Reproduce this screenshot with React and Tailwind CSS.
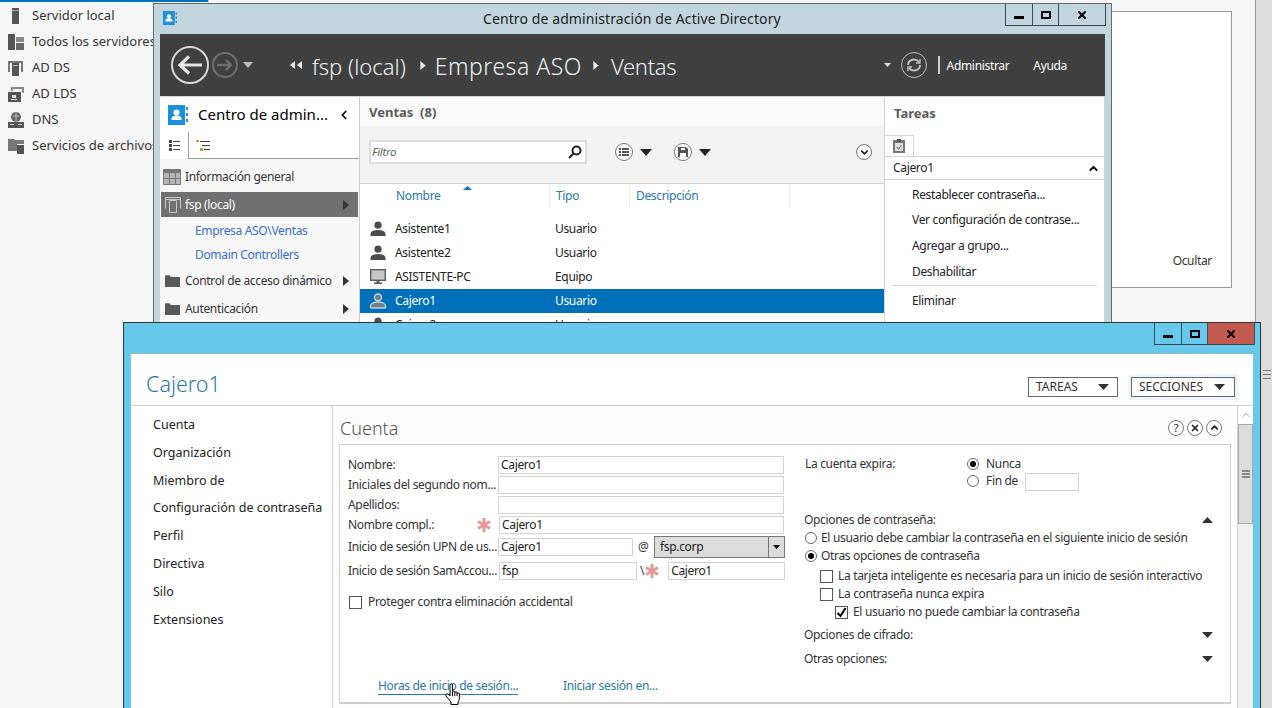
import { ChevronLeft, ChevronUp, ChevronDown, X } from 'lucide-react'

const FONT = "font-['Noto_Sans','Open_Sans',sans-serif]"

const TriDown = ({ className = '' }) => (
  <svg className={className} width="12" height="7" viewBox="0 0 12 7" preserveAspectRatio="none"><path d="M0 0h12L6 7z" fill="currentColor" /></svg>
)
const TriUp = ({ className = '' }) => (
  <svg className={className} width="12" height="7" viewBox="0 0 12 7" preserveAspectRatio="none"><path d="M0 7h12L6 0z" fill="currentColor" /></svg>
)
const TriRight = ({ className = '' }) => (
  <svg className={className} width="6" height="10" viewBox="0 0 6 10"><path d="M0 0l6 5-6 5z" fill="currentColor" /></svg>
)

const UserIcon = ({ color = '#4d4d4d' }) => (
  <svg width="16" height="16" viewBox="0 0 16 16">
    <circle cx="8" cy="4.2" r="3.6" fill={color} />
    <path d="M0.5 15v-2.2C0.5 10.5 4 9 8 9s7.500 1.500 7.500 3.800V15z" fill={color} />
  </svg>
)
const UserOutline = () => (
  <svg width="16" height="16" viewBox="0 0 16 16" fill="#6f7f8c" stroke="#fff" strokeWidth="1">
    <circle cx="8" cy="4.4" r="3.6" />
    <path d="M0.5 15v-2.2C0.5 10.5 4 9 8 9s7.500 1.500 7.500 3.800V15z" />
  </svg>
)
const PcIcon = () => (
  <svg width="16" height="16" viewBox="0 0 16 16">
    <rect x="0.7" y="0.7" width="14.6" height="10.6" fill="#c9c9c9" stroke="#5a5a5a" strokeWidth="1.4" />
    <path d="M6.5 12h3v1.500h2.500V15H4v-1.500h2.500z" fill="#5a5a5a" />
  </svg>
)
const FolderIcon = () => (
  <svg width="15" height="12" viewBox="0 0 15 12">
    <path d="M0 1h5l1 1h9v10H0z" fill="#595959" />
    <path d="M0 0h5v1H0z" fill="#8a8a8a" />
  </svg>
)
const ServerIcons = {
  local: <svg width="16" height="16" viewBox="0 0 16 16"><rect x="4" y="0" width="7" height="16" fill="#555" /><rect x="4" y="2" width="7" height="1" fill="#aaa" /></svg>,
  all: <svg width="16" height="16" viewBox="0 0 16 16"><rect x="0" y="0" width="7" height="16" fill="#555" /><rect x="8" y="3" width="8" height="5" fill="#888" /><rect x="8" y="9" width="8" height="7" fill="#666" /></svg>,
  adds: <svg width="16" height="16" viewBox="0 0 16 16"><path d="M0 1h15v2H0zM0 3h2v9H0zM13 3h2v9h-2z" fill="#777" /><rect x="4" y="3" width="7" height="13" fill="#555" /><rect x="5" y="5" width="5" height="1" fill="#bbb" /></svg>,
  adlds: <svg width="16" height="16" viewBox="0 0 16 16"><path d="M3 1h13v2H3zM3 3h2v2H3zM14 3h2v4h-2z" fill="#888" /><rect x="0" y="6" width="13" height="10" fill="#555" /><rect x="4" y="9" width="4" height="3" fill="#ddd" /><rect x="3" y="13" width="6" height="1" fill="#ddd" /></svg>,
  dns: <svg width="16" height="16" viewBox="0 0 16 16"><circle cx="8" cy="5" r="5" fill="#666" /><path d="M5 4h6M8 0v10" stroke="#bbb" /><rect x="0" y="10" width="16" height="6" fill="#555" /><rect x="2" y="12" width="4" height="1" fill="#ccc" /><rect x="10" y="12" width="4" height="1" fill="#ccc" /></svg>,
  files: <svg width="16" height="16" viewBox="0 0 16 16"><path d="M0 1h6l1 1h9v4H9v7H0z" fill="#777" /><rect x="9" y="7" width="7" height="9" fill="#555" /></svg>,
}

const ADIcon = ({ size = 20 }) => (
  <svg width={size} height={size} viewBox="0 0 20 20">
    <rect x="0" y="0" width="17" height="20" fill="#1e8fdc" />
    <circle cx="8.5" cy="7.5" r="3" fill="#fff" />
    <path d="M3.500 15v-1.500c0-2 2.500-3 5-3s5 1 5 3V15z" fill="#fff" />
    <path d="M18 2h2v3h-2zM18 8h2v3h-2zM18 14h2v3h-2z" fill="#1e8fdc" />
  </svg>
)

const servers = [
  ['local', 'Servidor local'],
  ['all', 'Todos los servidores'],
  ['adds', 'AD DS'],
  ['adlds', 'AD LDS'],
  ['dns', 'DNS'],
  ['files', 'Servicios de archivos'],
]

const ServerSidebar = () => (
  <div className="flex w-[208px] flex-col pt-px">
    {servers.map(([key, label]) => (
      <div key={key} className="flex h-[26px] items-center gap-[8px] pl-[8px] text-[13px] text-[#333]">
        {ServerIcons[key]}
        <span className="whitespace-nowrap">{label}</span>
      </div>
    ))}
  </div>
)

const WinButtons = ({ red }) => (
  <div className="flex h-[22px] border border-t-0 border-[#3a4a50] text-black">
    <div className="flex w-[27px] items-center justify-center border-r border-[#3a4a50]">
      <div className="mt-[6px] h-[3px] w-[10px] bg-black" />
    </div>
    <div className="flex w-[26px] items-center justify-center border-r border-[#3a4a50]">
      <div className="h-[8px] w-[10px] border-2 border-black" />
    </div>
    <div className={`flex w-[46px] items-center justify-center ${red ? 'bg-[#c25a50]' : ''}`}>
      <X size={12} strokeWidth={4} />
    </div>
  </div>
)

const rows = [
  ['user', 'Asistente1', 'Usuario'],
  ['user', 'Asistente2', 'Usuario'],
  ['pc', 'ASISTENTE-PC', 'Equipo'],
  ['sel', 'Cajero1', 'Usuario'],
  ['user', 'Cajero2', 'Usuario'],
]

const NavTree = () => (
  <div className="flex w-[200px] flex-col whitespace-nowrap border-r border-[#cfcfcf] bg-[#f7f7f7]">
    <div className="flex h-[35px] items-center bg-white pl-[8px] pr-[8px]">
      <ADIcon size={20} />
      <span className="ml-[10px] flex-1 text-[15px] tracking-normal text-black">Centro de admin...</span>
      <ChevronLeft size={14} strokeWidth={3} className="text-black" />
    </div>
    <div className="flex h-[27px] border-b border-[#9a9a9a] bg-white">
      <div className="flex h-[27px] w-[29px] items-center justify-center border-r border-[#9a9a9a] bg-white">
        <svg width="11" height="11" viewBox="0 0 11 11" fill="#444"><path d="M0 0h3v3H0zM4 1h7v1H4zM0 4h3v3H0zM4 5h7v1H4zM0 8h3v3H0zM4 9h7v1H4z" /></svg>
      </div>
      <div className="flex w-[29px] items-center justify-center">
        <svg width="15" height="11" viewBox="0 0 15 11"><path d="M0 0h3v2H0zM4 8h3v3H4z" fill="#c79a3a" /><path d="M4 1h10v1H4zM6 5h8v1H6zM8 9h6v1H8z" fill="#444" /></svg>
      </div>
    </div>
    <div className="flex h-[33px] items-center gap-[4px] pl-[3px] pt-[2px] text-[12px] text-[#333]">
      <svg width="18" height="16" viewBox="0 0 18 16"><rect width="18" height="16" fill="#777" /><path d="M1 4h5v5H1zM7 4h5v5H7zM13 4h4v5h-4zM1 10h5v5H1zM7 10h5v5H7zM13 10h4v5h-4z" fill="#b5b5b5" /></svg>
      <span>Información general</span>
    </div>
    <div className="mx-px flex h-[25px] items-center gap-[4px] bg-[#707070] pl-[4px] pr-[9px] text-[12px] text-white">
      <svg width="16" height="16" viewBox="0 0 16 16" fill="none" stroke="#c8c8c8"><path d="M.5.5h15v2H.5zM.5 2.500v9M15.500 2.500v9M4.500 3.500h7v12h-7z" /></svg>
      <span className="flex-1">fsp (local)</span>
      <TriRight className="text-[#333]" />
    </div>
    <div className="flex h-[25px] items-center pl-[35px] pt-[2px] text-[12px] text-[#3a6ecb]">Empresa ASO\Ventas</div>
    <div className="flex h-[24px] items-center pl-[35px] pt-[2px] text-[12px] text-[#3a6ecb]">Domain Controllers</div>
    <div className="flex h-[28px] items-center gap-[5px] pl-[5px] pr-[10px] pt-[2px] text-[12px] text-[#333]">
      <FolderIcon />
      <span className="flex-1">Control de acceso dinámico</span>
      <TriRight className="text-[#333]" />
    </div>
    <div className="flex h-[28px] items-center gap-[5px] pl-[5px] pr-[10px] pt-[2px] text-[12px] text-[#333]">
      <FolderIcon />
      <span className="flex-1">Autenticación</span>
      <TriRight className="text-[#333]" />
    </div>
  </div>
)

const MainList = () => (
  <div className="flex w-[524px] flex-col bg-white">
    <div className="flex h-[29px] items-center bg-[#fafafa] pl-[9px] pt-[2px] text-[13px] font-bold tracking-normal text-[#5b5b5b]">
      Ventas&nbsp;&nbsp;(8)
    </div>
    <div className="flex h-[58px] items-center border-b border-[#d5d5d5] bg-[#f2f2f2] pb-[5px] pl-[9px] pr-[12px]">
      <div className="flex h-[24px] w-[218px] items-center justify-between border-2 border-[#dcdcdc] bg-white pl-[1px] pr-[3px] text-[11.5px] italic text-[#666]">
        <span>Filtro</span>
        <svg width="14" height="14" viewBox="0 0 14 14" fill="none" stroke="#222" strokeWidth="2"><circle cx="8.5" cy="5.5" r="4" /><path d="M5.500 8.500L1 13" /></svg>
      </div>
      <div className="ml-[28px] flex h-[18px] w-[18px] items-center justify-center rounded-full border border-[#777] bg-white">
        <svg width="10" height="8" viewBox="0 0 10 8" fill="#555"><path d="M0 0h2v2H0zM3 0h7v2H3zM0 3h2v2H0zM3 3h7v2H3zM0 6h2v2H0zM3 6h7v2H3z" /></svg>
      </div>
      <TriDown className="ml-[7px] text-[#222]" />
      <div className="ml-[22px] flex h-[18px] w-[18px] items-center justify-center rounded-full border border-[#777] bg-white">
        <svg width="10" height="10" viewBox="0 0 10 10" fill="#555"><path d="M0 0h8l2 2v8H0zM2 6v4h6V6zM3 1v2h4V1z" /></svg>
      </div>
      <TriDown className="ml-[7px] text-[#222]" />
      <div className="ml-auto flex h-[16px] w-[16px] items-center justify-center rounded-full border border-[#777] bg-white">
        <ChevronDown size={11} strokeWidth={3.5} className="text-[#222]" />
      </div>
    </div>
    <div className="relative flex h-[24px] items-center text-[12px] text-[#2a78b5]">
      <TriUp className="absolute left-[103px] top-[2px] h-[4px] w-[9px] text-[#1673b8]" />
      <div className="flex h-full w-[190px] items-center border-r border-[#ececec] pl-[36px]">Nombre</div>
      <div className="flex h-full w-[80px] items-center border-r border-[#ececec] pl-[6px]">Tipo</div>
      <div className="flex h-full w-[160px] items-center border-r border-[#ececec] pl-[6px]">Descripción</div>
    </div>
    <div className="flex flex-col pt-[9px] text-[12px] text-[#222]">
      {rows.map(([kind, name, type]) => (
        <div key={name} className={`flex h-[24px] shrink-0 items-center ${kind === 'sel' ? 'bg-[#0070bb] text-white' : ''}`}>
          <div className="flex w-[35px] justify-center pl-[1px]">
            {kind === 'user' && <UserIcon />}
            {kind === 'pc' && <PcIcon />}
            {kind === 'sel' && <UserOutline />}
          </div>
          <div className="w-[160px]">{name}</div>
          <div>{type}</div>
        </div>
      ))}
    </div>
  </div>
)

const tasks = ['Restablecer contraseña...', 'Ver configuración de contrase...', 'Agregar a grupo...', 'Deshabilitar']

const TasksPanel = () => (
  <div className="flex w-[220px] flex-col border-l border-[#d5d5d5] bg-white">
    <div className="flex h-[38px] items-center pb-[4px] pl-[9px] text-[13px] font-bold tracking-normal text-[#5b5b5b]">Tareas</div>
    <div className="flex h-[21px] items-end">
      <div className="flex h-[21px] w-[29px] items-center justify-center border-r border-t border-[#d5d5d5]">
        <svg width="12" height="14" viewBox="0 0 12 14">
          <rect y="1" width="12" height="13" fill="#777" />
          <rect x="2" y="4" width="8" height="8" fill="#e2e2e2" />
          <rect x="4" y="0" width="4" height="3" fill="#555" />
          <path d="M3.500 8l2 2 3-4" fill="none" stroke="#888" strokeWidth="1.2" />
        </svg>
      </div>
    </div>
    <div className="flex h-[24px] items-center justify-between border-y border-[#d5d5d5] pl-[8px] pr-[4px] text-[12px] text-[#222]">
      <span>Cajero1</span>
      <ChevronUp size={13} strokeWidth={3.5} className="text-black" />
    </div>
    <div className="flex flex-col pl-[27px] pt-[2px] text-[12px] text-[#222]">
      {tasks.map((t) => (
        <div key={t} className="flex h-[25.6px] items-center">{t}</div>
      ))}
    </div>
    <div className="ml-[7px] mr-[7px] mt-[1px] border-t border-[#d5d5d5]" />
    <div className="flex h-[29px] items-center pl-[27px] text-[12px] text-[#222]">Eliminar</div>
  </div>
)

const ADWindow = () => (
  <div className="absolute left-[153px] top-[3px] flex h-[340px] w-[959px] flex-col overflow-hidden border border-[#5f6b70] bg-[#c3d5dc] tracking-[-0.33px]">
    <div className="relative flex h-[30px] shrink-0 items-center">
      <div className="ml-[9px] mt-[-2px]"><ADIcon size={14} /></div>
      <div className="absolute left-[329px] top-[4px] text-[14px] tracking-[0.1px] text-[#222]">Centro de administración de Active Directory</div>
      <div className="ml-auto mr-[5px] self-start"><WinButtons /></div>
    </div>
    <div className="mx-[6px] flex h-[62px] shrink-0 items-center bg-[#404040] tracking-normal text-white">
      <div className="ml-[11px] flex h-[38px] w-[38px] items-center justify-center rounded-full border-2 border-[#d8d8d8]">
        <svg width="26" height="20" viewBox="0 0 26 20" fill="none" stroke="#e6e6e6" strokeWidth="3.2"><path d="M25 10H3M12 1.500L3 10l9 8.500" /></svg>
      </div>
      <div className="ml-[3px] flex h-[26px] w-[26px] items-center justify-center rounded-full border-2 border-[#6f6f6f]">
        <svg width="16" height="12" viewBox="0 0 16 12" fill="none" stroke="#707070" strokeWidth="2.4"><path d="M0 6h14M9 1l5 5-5 5" /></svg>
      </div>
      <TriDown className="ml-[5px] h-[6px] w-[10px] text-[#bdbdbd]" />
      <svg className="ml-[37px]" width="12" height="8" viewBox="0 0 12 8" fill="#e8e8e8"><path d="M5 0v8L0 4zM12 0v8L7 4z" /></svg>
      <span className="ml-[10px] whitespace-nowrap pt-[2px] text-[22px] font-light leading-none text-[#e8f2f8]">fsp (local)</span>
      <TriRight className="ml-[14px] h-[9px] text-[#e8e8e8]" />
      <span className="ml-[9px] whitespace-nowrap pt-[2px] text-[23px] font-light leading-none tracking-[0.5px] text-[#e8f2f8]">Empresa ASO</span>
      <TriRight className="ml-[11px] h-[9px] text-[#e8e8e8]" />
      <span className="ml-[12px] whitespace-nowrap pt-[2px] text-[22px] font-light leading-none tracking-[-0.3px] text-[#e8f2f8]">Ventas</span>
      <TriDown className="ml-auto h-[4px] w-[7px] text-[#ddd]" />
      <div className="ml-[10px] flex h-[26px] w-[26px] items-center justify-center rounded-full border border-[#bdbdbd]">
        <svg width="16" height="14" viewBox="0 0 16 14" fill="none" stroke="#bdbdbd" strokeWidth="2"><path d="M2 7a6 5.500 0 0 1 11-3M14 7a6 5.500 0 0 1-11 3" /><path d="M14 1v4h-4M2 13V9h4" strokeWidth="1.4" /></svg>
      </div>
      <div className="ml-[11px] h-[18px] w-[2px] bg-[#cfcfcf]" />
      <span className="ml-[7px] mt-[2px] text-[12px] tracking-[-0.33px]">Administrar</span>
      <span className="ml-[24px] mr-[38px] mt-[2px] text-[12px] tracking-[-0.33px]">Ayuda</span>
    </div>
    <div className="mx-[6px] flex flex-1 border-t border-[#d5d5d5]">
      <NavTree />
      <MainList />
      <TasksPanel />
    </div>
  </div>
)

const Field = ({ className = '', children }) => (
  <div className={`flex h-[18px] items-center border-[1.5px] border-[#d3d3d3] bg-white pl-[2px] text-[12px] text-[#222] ${className}`}>
    {children}
  </div>
)

const Asterisk = ({ className = '' }) => (
  <svg className={className} width="14" height="14" viewBox="0 0 14 14" fill="none" stroke="#e59a9a" strokeWidth="3"><path d="M7 0v14M1 3.500l12 7M13 3.500l-12 7" /></svg>
)

const Check = ({ checked }) => (
  <div className="flex h-[13px] w-[13px] shrink-0 items-center justify-center border border-[#555] bg-white">
    {checked && (
      <svg width="11" height="11" viewBox="0 0 11 11" fill="none" stroke="#000" strokeWidth="2"><path d="M1.500 6l3 3 5-8" /></svg>
    )}
  </div>
)

const Radio = ({ checked }) => (
  <div className="flex h-[12px] w-[12px] shrink-0 items-center justify-center rounded-full border border-[#666] bg-white">
    {checked && <div className="h-[6px] w-[6px] rounded-full bg-black" />}
  </div>
)

const FormRow = ({ h = 'h-[20px]', label, children }) => (
  <div className={`flex items-center ${h}`}>
    <div className="w-[150px] shrink-0 whitespace-nowrap text-[12px] text-[#333]">{label}</div>
    {children}
  </div>
)

const AccountForm = () => (
  <div className="mx-[6px] flex h-[260px] whitespace-nowrap border border-b-2 border-[#cfcfcf] bg-white">
    <div className="flex w-[451px] flex-col pl-[8px] pt-[10px]">
      <FormRow label="Nombre:"><Field className="w-[286px]">Cajero1</Field></FormRow>
      <FormRow label="Iniciales del segundo nom..."><Field className="w-[286px]" /></FormRow>
      <FormRow label="Apellidos:"><Field className="w-[286px]" /></FormRow>
      <FormRow label="Nombre compl.:">
        <div className="relative w-[286px]">
          <Asterisk className="absolute left-[-21px] top-[2px]" />
          <Field className="ml-px">Cajero1</Field>
        </div>
      </FormRow>
      <FormRow h="h-[24px]" label="Inicio de sesión UPN de us...">
        <Field className="w-[135px]">Cajero1</Field>
        <span className="ml-[5px] w-[16px] text-[12px] text-[#333]">@</span>
        <div className="flex h-[22px] w-[131px] items-center justify-between border border-[#777] bg-[#dcdcdc] pl-[5px] text-[12px] text-[#222]">
          fsp.corp
          <div className="flex h-full w-[16px] items-center justify-center border-l border-[#777]">
            <TriDown className="h-[4px] w-[7px] text-black" />
          </div>
        </div>
      </FormRow>
      <FormRow h="h-[24px]" label="Inicio de sesión SamAccou...">
        <Field className="ml-px w-[138px]">fsp</Field>
        <span className="ml-[3px] text-[12px] text-[#333]">\</span>
        <Asterisk className="ml-[1px]" />
        <Field className="ml-[9px] w-[117px]">Cajero1</Field>
      </FormRow>
      <div className="mt-[10px] flex items-center gap-[6px] pl-px text-[12px] text-[#333]">
        <Check />
        <span>Proteger contra eliminación accidental</span>
      </div>
      <div className="relative mt-[67px] flex gap-[45px] pl-[30px] text-[12px] text-[#2a78a5]">
        <span className="w-[140px] border-b border-[#2a78a5] leading-[16px]">Horas de inicio de sesión...</span>
        <span className="leading-[16px]">Iniciar sesión en...</span>
        <svg className="absolute left-[97px] top-[5px]" width="17" height="23" viewBox="0 0 17 23">
          <path d="M5 2c0-1.600 2.500-1.600 2.500 0v7c0-1.200 2.300-1.200 2.300 0v.8c0-1.200 2.200-1.200 2.200 0v.8c0-1.100 2.300-1.100 2.300.2v4.700c0 1.500-.5 2.500-1.300 3.500v2.500H6v-2.500L1 13c-1-1.500.7-3 2-1.800L5 13z" fill="#fff" stroke="#000" strokeWidth="1" strokeLinejoin="round" />
          <path d="M7.500 9v4M9.800 10v3M12 10.500V13" stroke="#000" strokeWidth="1" fill="none" />
        </svg>
      </div>
    </div>
    <div className="flex flex-1 flex-col pl-[13px] pr-[17px] pt-[10px] text-[12px] text-[#333]">
      <div className="flex">
        <div className="ml-[1px] w-[162px]">La cuenta expira:</div>
        <div className="flex flex-col">
          <div className="flex h-[17px] items-center gap-[7px]"><Radio checked /><span>Nunca</span></div>
          <div className="flex h-[17px] items-center gap-[7px]">
            <Radio /><span>Fin de</span>
            <div className="mt-[2px] h-[18px] w-[54px] border-[1.5px] border-[#d3d3d3] bg-white" />
          </div>
        </div>
      </div>
      <div className="mt-[22px] flex h-[18px] items-center justify-between">
        <span>Opciones de contraseña:</span>
        <TriUp className="h-[6px] w-[11px] text-[#333]" />
      </div>
      <div className="flex h-[18px] items-center gap-[4px] pl-[1px]"><Radio /><span>El usuario debe cambiar la contraseña en el siguiente inicio de sesión</span></div>
      <div className="flex h-[18px] items-center gap-[4px] pl-[1px]"><Radio checked /><span>Otras opciones de contraseña</span></div>
      <div className="mt-[2px] flex h-[18px] items-center gap-[5px] pl-[16px]"><Check /><span>La tarjeta inteligente es necesaria para un inicio de sesión interactivo</span></div>
      <div className="flex h-[18px] items-center gap-[5px] pl-[16px]"><Check /><span>La contraseña nunca expira</span></div>
      <div className="flex h-[18px] items-center gap-[5px] pl-[31px]"><Check checked /><span>El usuario no puede cambiar la contraseña</span></div>
      <div className="mt-[5px] flex h-[18px] items-center justify-between">
        <span>Opciones de cifrado:</span>
        <TriDown className="h-[6px] w-[11px] text-[#333]" />
      </div>
      <div className="mt-[6px] flex h-[18px] items-center justify-between">
        <span>Otras opciones:</span>
        <TriDown className="h-[6px] w-[11px] text-[#333]" />
      </div>
    </div>
  </div>
)

const dialogNav = ['Cuenta', 'Organización', 'Miembro de', 'Configuración de contraseña', 'Perfil', 'Directiva', 'Silo', 'Extensiones']

const RoundBtn = ({ children }) => (
  <div className="flex h-[16px] w-[16px] items-center justify-center rounded-full border border-[#777] bg-white text-[11px] leading-none text-[#222]">
    {children}
  </div>
)

const UserDialog = () => (
  <div className="absolute left-[123px] top-[322px] flex h-[400px] w-[1138px] flex-col border border-[#333] bg-[#66c9eb] tracking-[-0.33px]">
    <div className="flex h-[30px] shrink-0 justify-end pr-[5px]"><WinButtons red /></div>
    <div className="mx-[7px] flex flex-1 flex-col border-t border-[#88b5c8] bg-white">
      <div className="flex h-[52px] shrink-0 items-center border-b border-[#cfcfcf] pl-[15px] pr-[18px]">
        <span className="mt-[10px] text-[21.5px] font-light tracking-normal text-[#2a7ba8]">Cajero1</span>
        <div className="ml-auto mt-[14px] flex h-[20px] w-[90px] items-center justify-between border border-[#666] pl-[7px] pr-[8px] text-[12px] tracking-normal text-[#333]">
          TAREAS
          <TriDown className="h-[6px] w-[11px] text-[#333]" />
        </div>
        <div className="ml-[13px] mt-[14px] flex h-[20px] w-[104px] items-center justify-between border border-[#666] pl-[7px] pr-[9px] text-[12px] tracking-normal text-[#333] shadow-[0_0_0_3px_#f0f4fd]">
          SECCIONES
          <TriDown className="h-[6px] w-[11px] text-[#333]" />
        </div>
      </div>
      <div className="flex flex-1">
        <div className="flex w-[202px] shrink-0 flex-col border-r border-[#cfcfcf] pl-[22px] pt-[5.500px] text-[12.5px] tracking-normal text-[#222]">
          {dialogNav.map((n) => (
            <div key={n} className="flex h-[27.8px] shrink-0 items-center whitespace-nowrap">{n}</div>
          ))}
        </div>
        <div className="flex flex-1 flex-col bg-[#fdfdfd]">
          <div className="flex h-[38px] shrink-0 items-center pl-[7px] pr-[15px]">
            <span className="mt-[6px] text-[18px] font-light tracking-normal text-[#555]">Cuenta</span>
            <div className="ml-auto mt-[5px] flex gap-[3px]">
              <RoundBtn>?</RoundBtn>
              <RoundBtn><X size={10} strokeWidth={4} /></RoundBtn>
              <RoundBtn><ChevronUp size={11} strokeWidth={4} /></RoundBtn>
            </div>
          </div>
          <AccountForm />
        </div>
        <div className="flex w-[16px] shrink-0 flex-col border-l border-[#cfcfcf] bg-white">
          <div className="flex h-[18px] items-center justify-center">
            <ChevronUp size={12} strokeWidth={1.5} className="text-[#777]" />
          </div>
          <div className="flex h-[100px] items-center justify-center border border-[#aaa] bg-[#dcdcdc]">
            <div className="h-[8px] w-[8px] border-y-2 border-[#888] bg-[linear-gradient(#dcdcdc_33%,#888_33%,#888_66%,#dcdcdc_66%)]" />
          </div>
          <div className="flex-1 bg-[#f0f0f0]" />
        </div>
      </div>
    </div>
  </div>
)

export default function App() {
  return (
    <div className={`relative h-[708px] w-[1278px] overflow-hidden bg-[#f6f6f6] ${FONT}`}>
      <div className="h-[2px] w-[208px] bg-[#0072c6]" />
      <ServerSidebar />

      {/* parts of server manager showing behind the windows */}
      <div className="absolute left-[208px] top-0 h-[10px] w-px bg-[#d5d5d5]" />
      <div className="absolute left-[999px] top-[11px] flex h-[277px] w-[233px] items-end justify-end border border-[#999] bg-white pb-[17px] pr-[19px] text-[12px] tracking-[-0.33px] text-[#333]">
        Ocultar
      </div>
      <div className="absolute left-[1255px] top-0 flex h-full w-[23px] bg-white">
        <div className="flex w-[17px] justify-end border-l border-[#999] bg-[#dcdcdc]">
          <div className="mr-[1px] mt-[370px] h-[9px] w-[8px] border-y border-[#777] bg-[linear-gradient(#dcdcdc_40%,#777_40%,#777_60%,#dcdcdc_60%)]" />
        </div>
      </div>

      <ADWindow />
      <UserDialog />
    </div>
  )
}
